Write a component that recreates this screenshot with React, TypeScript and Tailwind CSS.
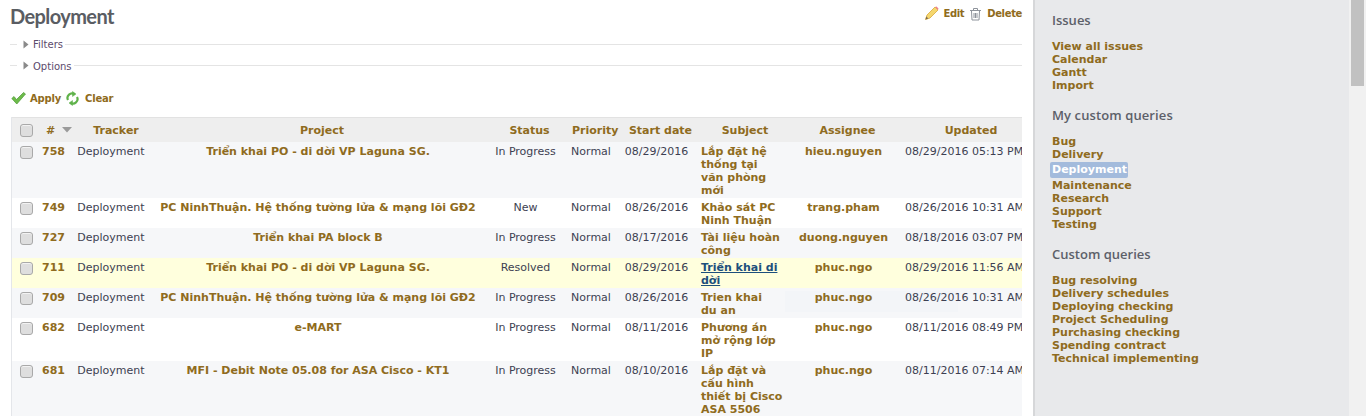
import React from "react";

const font = { fontFamily: '"DejaVu Sans", Verdana, sans-serif' };

type Row = {
  id: string; project: string; status: string; start: string; subject: string[]; assignee: string; updated: string; hi?: boolean; alt: boolean;
};

const rows: Row[] = [
  { id: "758", project: "Triển khai PO - di dời VP Laguna SG.", status: "In Progress", start: "08/29/2016", subject: ["Lắp đặt hệ", "thống tại", "văn phòng", "mới"], assignee: "hieu.nguyen", updated: "08/29/2016 05:13 PM", alt: true },
  { id: "749", project: "PC NinhThuận. Hệ thống tường lửa & mạng lõi GĐ2", status: "New", start: "08/26/2016", subject: ["Khảo sát PC", "Ninh Thuận"], assignee: "trang.pham", updated: "08/26/2016 10:31 AM", alt: false },
  { id: "727", project: "Triển khai PA block B", status: "In Progress", start: "08/17/2016", subject: ["Tài liệu hoàn", "công"], assignee: "duong.nguyen", updated: "08/18/2016 03:07 PM", alt: true },
  { id: "711", project: "Triển khai PO - di dời VP Laguna SG.", status: "Resolved", start: "08/29/2016", subject: ["Triển khai di", "dời"], assignee: "phuc.ngo", updated: "08/29/2016 11:56 AM", hi: true, alt: false },
  { id: "709", project: "PC NinhThuận. Hệ thống tường lửa & mạng lõi GĐ2", status: "In Progress", start: "08/26/2016", subject: ["Trien khai", "du an"], assignee: "phuc.ngo", updated: "08/26/2016 10:31 AM", alt: true },
  { id: "682", project: "e-MART", status: "In Progress", start: "08/11/2016", subject: ["Phương án", "mở rộng lớp", "IP"], assignee: "phuc.ngo", updated: "08/11/2016 08:49 PM", alt: false },
  { id: "681", project: "MFI - Debit Note 05.08 for ASA Cisco - KT1", status: "In Progress", start: "08/10/2016", subject: ["Lắp đặt và", "cấu hình", "thiết bị Cisco", "ASA 5506"], assignee: "phuc.ngo", updated: "08/11/2016 07:14 AM", alt: true },
];

const Box = () => (
  <span className="block w-[13px] h-[13px] rounded-[3px] border border-[#a9a9a9] bg-[#dedede] shadow-[inset_0_1px_0_#f2f2f2] mx-auto" />
);

const Th = ({ children, cls = "pl-2" }: { children: React.ReactNode; cls?: string }) => (
  <th className={`text-center font-bold text-[#8f6b20] pt-[6px] pb-[5px] whitespace-nowrap ${cls}`}>{children}</th>
);

const Link = ({ children }: { children: React.ReactNode }) => (
  <div className="font-bold text-[#8f6b20] leading-[13px] whitespace-nowrap">{children}</div>
);

const Group = ({ title, items, mt, track = "" }: { title: string; items: string[]; mt: string; track?: string }) => (
  <div className={mt}>
    <h3 className={`text-[13px] leading-[16px] text-[#5c6069] font-semibold mb-[12px] ${track}`} style={{ fontFamily: '"Open Sans", sans-serif' }}>{title}</h3>
    {items.map((i) =>
      i === "Deployment" ? (
        <div key={i} className="my-[1px] -ml-[2px] w-[78px] pl-[2px] h-[16px] leading-[16px] rounded-[2px] bg-[#a3bbdc] text-white font-bold">{i}</div>
      ) : (
        <Link key={i}>{i}</Link>
      )
    )}
  </div>
);

const Fold = ({ label, cls, textCls = "" }: { label: string; cls: string; textCls?: string }) => (
  <div className={`flex items-center h-[13px] ${cls}`}>
    <div className="w-[7px] h-px bg-[#e4e4e4] ml-[10px]" />
    <svg width="6" height="9" viewBox="0 0 6 9" className="ml-[6px]"><path d="M0.5 0.5 L5.5 4.5 L0.5 8.5 Z" fill="#8a8a8a" /></svg>
    <span className={`ml-[4px] text-[#5b4a6b] text-[10px] ${textCls}`}>{label}</span>
    <div className="flex-1 h-px bg-[#e4e4e4] ml-[2px]" />
  </div>
);

export default function App() {
  return (
    <div className="flex h-[416px] w-[1366px] overflow-hidden bg-white text-[11px] text-[#3d3f52]" style={font}>
      <main className="relative w-[1033px] shrink-0 pr-[11px]">
        <div className="flex items-start justify-between h-[36px]">
          <h2 className="ml-[10px] mt-[2px] text-[20px] leading-[28px] font-bold tracking-[-0.6px] text-[#5a5d63]" style={{ fontFamily: 'Lato, sans-serif' }}>Deployment</h2>
          <div className="flex items-center h-[13px] mt-[7px] text-[10px] tracking-[-0.35px] font-bold text-[#8f6b20]">
            <svg width="15" height="15" viewBox="0 0 15 15"><path d="M1.5 13.5 L3 9 L11 1 L14 4 L6 12 Z" fill="#f5d76e" stroke="#d9a93c" strokeWidth="0.8" /><path d="M11 1 L12.5 0.5 L14.5 2.5 L14 4 Z" fill="#ee7f8c" /><path d="M1.5 13.5 L2.4 10.6 L4.3 12.6 Z" fill="#7a6a50" /></svg>
            <span className="ml-[4px]">Edit</span>
            <svg width="13" height="14" viewBox="0 0 13 14" className="ml-[5px]" fill="none" stroke="#8e939b" strokeWidth="1"><path d="M1 3.5 H12 M4.5 3 V1.5 H8.5 V3 M2.5 4 L3 13 H10 L10.5 4 M5 6 V11 M6.5 6 V11 M8 6 V11" /></svg>
            <span className="ml-[5px]">Delete</span>
          </div>
        </div>
        <Fold label="Filters" cls="mt-[2px]" />
        <Fold label="Options" cls="mt-[8px]" textCls="mt-[2px]" />
        <div className="flex items-center h-[14px] mt-[19px] ml-[11px] text-[10px] tracking-[-0.2px] font-bold text-[#8f6b20]">
          <svg width="15" height="14" viewBox="0 0 15 14"><path d="M0.8 7.5 L3 5.5 L5.5 8.5 L12.5 1.5 L14.5 3 L5.8 13 Z" fill="#6dbb4a" stroke="#4a9a34" strokeWidth="0.7" /></svg>
          <span className="ml-[4px]">Apply</span>
          <svg width="13" height="15" viewBox="0 0 13 15" className="ml-[5px]" fill="none" stroke="#5fb24a" strokeWidth="2.2"><path d="M2 9 A4.5 4.5 0 0 1 8.5 3.2" /><path d="M11 6 A4.5 4.5 0 0 1 4.5 11.8" /><path d="M6.5 0.5 L10 3 L6.5 5.5 Z" fill="#5fb24a" strokeWidth="0.5" /><path d="M6.5 9.5 L3 12 L6.5 14.5 Z" fill="#5fb24a" strokeWidth="0.5" /></svg>
          <span className="ml-[6px]">Clear</span>
        </div>
        <div className="ml-[11px] mt-[12px] overflow-hidden border-l border-[#e4e6ea]">
          <table className="table-fixed border-collapse w-[1025px] max-w-none">
            <colgroup>
              <col className="w-[22px]" /><col className="w-[37px]" /><col className="w-[78px]" /><col className="w-[338px]" /><col className="w-[77px]" /><col className="w-[54px]" /><col className="w-[77px]" /><col className="w-[95px]" /><col className="w-[107px]" /><col className="w-[140px]" />
            </colgroup>
            <thead>
              <tr className="bg-[#eeeeee] border-t border-[#e2e2e2] leading-[13px]">
                <th className="pl-[7px] py-0"><Box /></th>
                <th className="text-center font-bold text-[#8f6b20] whitespace-nowrap pl-[12px]">#<svg width="10" height="6" viewBox="0 0 10 6" className="inline ml-[7px] align-[1px]"><path d="M0 0 H10 L5 5.5 Z" fill="#9a9a9a" /></svg></th>
                <th className="text-center font-bold text-[#8f6b20] pl-[12px]">Tracker</th>
                <Th>Project</Th><Th>Status</Th><Th>Priority</Th><Th>Start date</Th><Th cls="pl-[5px]">Subject</Th><Th>Assignee</Th><Th>Updated</Th>
              </tr>
            </thead>
            <tbody className="leading-[13px]">
              {rows.map((r) => (
                <tr key={r.id} className={r.hi ? "bg-[#ffffdd]" : r.alt ? "bg-[#f6f7f9]" : "bg-white"}>
                  <td className="align-top pl-[7px] pt-[4px] pb-px"><Box /></td>
                  <td className="align-top text-center font-bold text-[#8f6b20] pt-[3px] pb-px pl-[2px]">{r.id}</td>
                  <td className="align-top text-center pt-[3px] pb-px pl-[2px]">Deployment</td>
                  <td className="align-top text-center font-bold text-[#8f6b20] pt-[3px] pb-px whitespace-nowrap">{r.project}</td>
                  <td className="align-top text-center pt-[3px] pb-px whitespace-nowrap">{r.status}</td>
                  <td className="align-top text-center pt-[3px] pb-px">Normal</td>
                  <td className="align-top text-center pt-[3px] pb-px">{r.start}</td>
                  <td className={`align-top pl-[6px] pt-[3px] pb-px font-bold whitespace-nowrap ${r.hi ? "text-[#1d4f7c] underline" : "text-[#8f6b20]"}`}>
                    {r.subject.map((s) => <div key={s}>{s}</div>)}
                  </td>
                  <td className="align-top text-center font-bold text-[#8f6b20] pt-[3px] pb-px">{r.assignee}</td>
                  <td className="align-top pl-[8px] pt-[3px] pb-px whitespace-nowrap">{r.updated}</td>
                </tr>
              ))}
            </tbody>
          </table>
        </div>
        <div className="absolute left-[785px] top-[291px] w-[173px] h-[21px] bg-[#4a78c8]/[0.015]" />
      </main>
      <aside className="w-[316px] shrink-0 bg-[#e8e9eb] border-l-2 border-[#d6d7d9] pl-[17px] pt-[12px]">
        <Group title="Issues" mt="" items={["View all issues", "Calendar", "Gantt", "Import"]} />
        <Group title="My custom queries" mt="mt-[15px]" track="tracking-[0.1px]" items={["Bug", "Delivery", "Deployment", "Maintenance", "Research", "Support", "Testing"]} />
        <Group title="Custom queries" mt="mt-[15px]" items={["Bug resolving", "Delivery schedules", "Deploying checking", "Project Scheduling", "Purchasing checking", "Spending contract", "Technical implementing"]} />
      </aside>
      <div className="w-[17px] shrink-0 bg-[#f1f1f1] px-[2px]">
        <div className="h-[86px] bg-[#c1c1c1]" />
      </div>
    </div>
  );
}
